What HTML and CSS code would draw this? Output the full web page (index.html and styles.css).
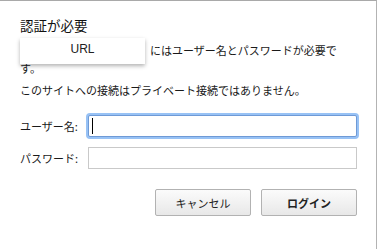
FILE: index.html
```html
<!DOCTYPE html>
<html lang="ja">
<head>
    <meta charset="UTF-8">
    <meta name="viewport" content="width=device-width, initial-scale=1.0">
    <title>認証が必要</title>
    <link rel="stylesheet" href="styles.css">
</head>
<body>
    <div class="dialog">
        <h1 class="title">認証が必要</h1>
        <p class="message"><span class="url">https://example.com</span>にはユーザー名とパスワードが必要です。</p>
        <p class="message notice">このサイトへの接続はプライベート接続ではありません。</p>

        <div class="url-tip">URL</div>

        <div class="form">
            <label for="username">ユーザー名:</label>
            <div class="field focused">
                <input type="text" id="username" autocomplete="off">
            </div>
            <label for="password">パスワード:</label>
            <div class="field">
                <input type="password" id="password">
            </div>
        </div>

        <div class="buttons">
            <button class="btn">キャンセル</button>
            <button class="btn primary">ログイン</button>
        </div>
    </div>
</body>
</html>
```

FILE: styles.css
```css
* {
    margin: 0;
    padding: 0;
    box-sizing: border-box;
}

body {
    background-color: #fff;
    color: #1a1a1a;
    font-family: "Noto Sans CJK JP", "Liberation Sans", sans-serif;
    font-size: 11px;
}

.dialog {
    position: relative;
    width: 377px;
    height: 249px;
    border-top: 1px solid #a9a9a9;
    border-right: 1px solid #b3b3b3;
    padding: 15px 19px 0 20px;
}

.title {
    font-size: 13.5px;
    font-weight: normal;
    line-height: 18px;
    color: #111;
}

.message {
    line-height: 18px;
    margin-top: 7px;
    padding-right: 14px;
}

.message.notice {
    margin-top: 4px;
}

.url {
    display: inline-block;
    width: 130px;
    overflow: hidden;
    white-space: nowrap;
    vertical-align: top;
    color: #1a1a1a;
}

.url-tip {
    position: absolute;
    top: 37px;
    left: 20px;
    width: 125px;
    height: 26px;
    background-color: #fff;
    box-shadow: 0 2px 4px rgba(0, 0, 0, 0.3);
    font-family: "Liberation Sans", Arial, sans-serif;
    font-size: 12px;
    line-height: 22px;
    text-align: center;
    color: #222;
}

.form {
    display: grid;
    grid-template-columns: 68px 1fr;
    row-gap: 10px;
    align-items: center;
    margin-top: 16px;
}

.form label {
    line-height: 22px;
}

.field {
    position: relative;
}

.field input {
    display: block;
    width: 100%;
    height: 22px;
    border: 1px solid #c9c9c9;
    background-color: #fff;
    outline: none;
    font-size: 11px;
    padding: 0 4px;
}

.field.focused input {
    border-color: #6f9ad6;
    border-radius: 2px;
    box-shadow: 0 0 0 2px #98c2f5;
}

.field.focused::after {
    content: "";
    position: absolute;
    left: 4px;
    top: 3px;
    width: 1px;
    height: 16px;
    background-color: #000;
}

.buttons {
    display: flex;
    justify-content: flex-end;
    gap: 10px;
    margin-top: 20px;
}

.btn {
    width: 96px;
    height: 27px;
    border: 1px solid #b2b2b2;
    border-radius: 2px;
    background: linear-gradient(#fbfbfb, #e8e8e8);
    color: #222;
    font-family: "Noto Sans CJK JP", sans-serif;
    font-size: 11px;
    cursor: pointer;
}

.btn.primary {
    font-weight: bold;
}
```
